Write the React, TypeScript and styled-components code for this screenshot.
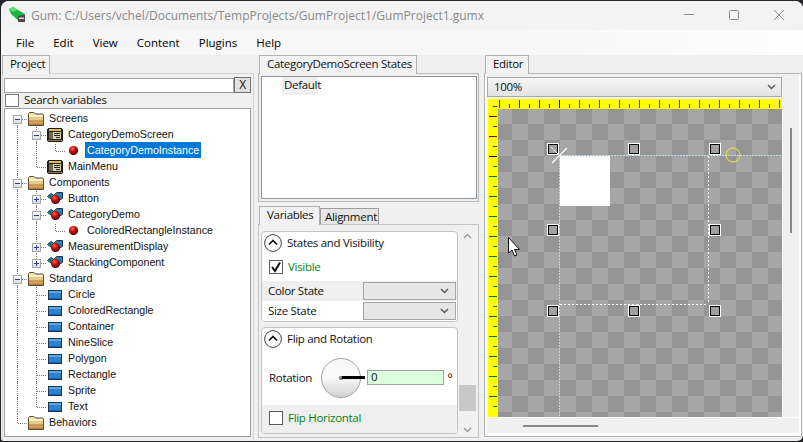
import React from "react";
import styled, { createGlobalStyle } from "styled-components";

const UI_FONT = `"Open Sans", "Liberation Sans", sans-serif`;
const TREE_FONT = `"Liberation Sans", Arial, sans-serif`;

type GuideKind = "pass" | "tee" | "elbow" | "first";
type IconKind = "folder" | "screen" | "component" | "instance" | "standard";

interface TreeNode {
  label: string;
  icon: IconKind;
  guides: GuideKind[];
  expander?: "plus" | "minus";
  selected?: boolean;
}

const standardTypes = ["Circle", "ColoredRectangle", "Container", "NineSlice", "Polygon", "Rectangle", "Sprite"];

const treeNodes: TreeNode[] = [
  { label: "Screens", icon: "folder", guides: ["first"], expander: "minus" },
  { label: "CategoryDemoScreen", icon: "screen", guides: ["pass", "tee"], expander: "minus" },
  { label: "CategoryDemoInstance", icon: "instance", guides: ["pass", "pass", "elbow"], selected: true },
  { label: "MainMenu", icon: "screen", guides: ["pass", "elbow"] },
  { label: "Components", icon: "folder", guides: ["tee"], expander: "minus" },
  { label: "Button", icon: "component", guides: ["pass", "tee"], expander: "plus" },
  { label: "CategoryDemo", icon: "component", guides: ["pass", "tee"], expander: "minus" },
  { label: "ColoredRectangleInstance", icon: "instance", guides: ["pass", "pass", "elbow"] },
  { label: "MeasurementDisplay", icon: "component", guides: ["pass", "tee"], expander: "plus" },
  { label: "StackingComponent", icon: "component", guides: ["pass", "elbow"], expander: "plus" },
  { label: "Standard", icon: "folder", guides: ["tee"], expander: "minus" },
  ...standardTypes.map((label): TreeNode => ({ label, icon: "standard", guides: ["pass", "tee"] })),
  { label: "Text", icon: "standard", guides: ["pass", "elbow"] },
  { label: "Behaviors", icon: "folder", guides: ["elbow"] },
];

const TreeIcon: React.FC<{ kind: IconKind }> = ({ kind }) => {
  if (kind === "folder") {
    return (
      <svg width="16" height="16" viewBox="0 0 16 16">
        <path d="M0.5 14.5V2.5L1.5 1.5H6L7.5 3H14.5L15.5 4V14.5Z" fill="#ece2a8" stroke="#5c4a28" />
        <rect x="1" y="4" width="14" height="2" fill="#f6f0c4" />
        <rect x="1" y="6" width="14" height="3" fill="#e2cc86" />
        <rect x="1" y="9" width="14" height="5" fill="#cf9c58" />
        <rect x="1" y="13" width="14" height="1" fill="#a87838" />
      </svg>
    );
  }
  if (kind === "screen") {
    return (
      <svg width="16" height="16" viewBox="0 0 16 16">
        <rect x="0.5" y="1.5" width="15" height="13" rx="1.5" fill="#26241c" stroke="#1a1a14" />
        <rect x="2" y="2" width="12" height="2" fill="#e6b85a" />
        <rect x="2" y="5" width="12" height="7" fill="#d9d4b4" />
        <rect x="2" y="5" width="4" height="7" fill="#6e6a4c" />
        <rect x="7" y="6" width="6" height="1" fill="#20201a" />
        <rect x="7" y="8" width="6" height="1" fill="#20201a" />
        <rect x="9" y="10" width="4" height="1" fill="#20201a" />
        <rect x="1" y="13" width="14" height="1" fill="#8c7a48" />
      </svg>
    );
  }
  if (kind === "component") {
    return (
      <svg width="18" height="16" viewBox="0 0 18 16">
        <defs>
          <radialGradient id="compBall" cx="40%" cy="30%" r="70%">
            <stop offset="0" stopColor="#ff6a5a" />
            <stop offset="0.45" stopColor="#c80d0d" />
            <stop offset="1" stopColor="#4e0000" />
          </radialGradient>
        </defs>
        <path d="M0.5 5.5L4 2.5L7 4.5L4 8Z" fill="#1c7f78" stroke="#0c3f42" />
        <path d="M7.5 3.5L10 1.5H15.5V7.5L12 9H7.5Z" fill="#2f7db8" stroke="#0e3450" />
        <circle cx="8.5" cy="8.5" r="4.6" fill="url(#compBall)" />
      </svg>
    );
  }
  if (kind === "instance") {
    return (
      <svg width="16" height="16" viewBox="0 0 16 16">
        <defs>
          <radialGradient id="instBall" cx="40%" cy="30%" r="70%">
            <stop offset="0" stopColor="#ff6a5a" />
            <stop offset="0.45" stopColor="#c80d0d" />
            <stop offset="1" stopColor="#4e0000" />
          </radialGradient>
        </defs>
        <circle cx="7.5" cy="7.5" r="4.6" fill="url(#instBall)" />
      </svg>
    );
  }
  return (
    <svg width="16" height="16" viewBox="0 0 16 16" shapeRendering="crispEdges">
      <rect x="1.5" y="3.5" width="13" height="9" fill="#2f7fd0" stroke="#0f3a52" />
      <rect x="2" y="4" width="12" height="2" fill="#5aa6e6" />
      <rect x="2" y="11" width="12" height="1" fill="#1e5f9e" />
    </svg>
  );
};

const AppLogo = () => (
  <svg width="20" height="18" viewBox="0 0 20 18">
    <path d="M1 3L5 1L17 8L11 15L3 8Z" fill="#19b53a" />
    <path d="M1 3L5 1L10 4L5 6Z" fill="#5fdc70" />
    <path d="M10 10L17 8.5V16H10Z" fill="#4c4c4c" />
    <path d="M11 11.5H16V13H11Z" fill="#d8d8d8" />
  </svg>
);

const Chevron: React.FC<{ up?: boolean; color?: string }> = ({ up, color = "#555" }) => (
  <svg width="9" height="6" viewBox="0 0 9 6">
    <path d={up ? "M1 5L4.5 1.5L8 5" : "M1 1L4.5 4.5L8 1"} fill="none" stroke={color} strokeWidth="1.4" />
  </svg>
);

const CollapseButton = () => (
  <CollapseCircle>
    <svg width="18" height="18" viewBox="0 0 18 18">
      <circle cx="9" cy="9" r="8.4" fill="#fdfdfd" stroke="#444" />
      <path d="M5 10.5L9 6.5L13 10.5" fill="none" stroke="#111" strokeWidth="1.7" />
    </svg>
  </CollapseCircle>
);

const CheckMark = () => (
  <svg width="12" height="12" viewBox="0 0 12 12">
    <path d="M2 6L5 10L10 1.5" fill="none" stroke="#111" strokeWidth="2" />
  </svg>
);

const handlePositions = [
  [547, 143],
  [628, 143],
  [709, 143],
  [547, 224],
  [709, 224],
  [547, 305],
  [628, 305],
  [709, 305],
];

const tickColor = (index: number, blackAt: number) =>
  index < blackAt ? "#8b0000" : index === blackAt ? "#000" : "#007000";

const EditorCanvas = () => (
  <CanvasSvg width="294" height="318" viewBox="488 99 294 318" shapeRendering="crispEdges">
    <defs>
      <pattern id="checker" patternUnits="userSpaceOnUse" x="512" y="108" width="32" height="32">
        <rect x="0" y="0" width="32" height="32" fill="#a6a6a6" />
        <rect x="0" y="0" width="16" height="16" fill="#959595" />
        <rect x="16" y="16" width="16" height="16" fill="#959595" />
      </pattern>
    </defs>
    <rect x="498" y="109" width="284" height="308" fill="url(#checker)" />
    <rect x="560" y="156" width="50" height="50" fill="#fff" />

    <line x1="559.5" y1="156" x2="559.5" y2="417" stroke="#b4dcea" strokeDasharray="2 1" />
    <line x1="560" y1="155.5" x2="782" y2="155.5" stroke="#c4e2ec" strokeDasharray="2 1" />
    <line x1="708.5" y1="156" x2="708.5" y2="304" stroke="#fff" strokeDasharray="2 2" />
    <line x1="560" y1="304.5" x2="708" y2="304.5" stroke="#fff" strokeDasharray="2 2" />

    {handlePositions.map(([x, y]) => (
      <g key={`${x}-${y}`}>
        <rect x={x} y={y} width="12" height="12" fill="#fff" />
        <rect x={x + 1} y={y + 1} width="10" height="10" fill="#000" />
        <rect x={x + 2} y={y + 2} width="8" height="8" fill="#a0a0a0" />
      </g>
    ))}

    <g shapeRendering="auto">
      <line x1="552" y1="163" x2="567" y2="148" stroke="#fff" strokeWidth="1.3" />
      <line x1="551" y1="147" x2="558" y2="154" stroke="#eee" />
      <circle cx="733" cy="155" r="7" fill="none" stroke="#f0f020" />
      <path
        d="M508.5 237.5V253L512 250L514.5 256L517 255L514.5 249.5H519.5Z"
        fill="#fff"
        stroke="#111"
        strokeWidth="1"
        strokeLinejoin="round"
      />
    </g>

    <rect x="488" y="99" width="294" height="10" fill="#ffff00" />
    <rect x="488" y="99" width="10" height="318" fill="#ffff00" />
    {Array.from({ length: 29 }, (_, k) => {
      const x = 499.5 + k * 10;
      return (
        <line
          key={k}
          x1={x}
          x2={x}
          y1={k % 2 === 0 ? 100 : 104}
          y2={108}
          stroke={tickColor(k, 6)}
        />
      );
    })}
    {Array.from({ length: 31 }, (_, k) => {
      const y = 106.5 + k * 10;
      const major = k % 2 === 1;
      return (
        <line
          key={k}
          y1={y}
          y2={y}
          x1={major ? 489 : 493}
          x2={497}
          stroke={tickColor(k, 5)}
        />
      );
    })}
  </CanvasSvg>
);

export default function App() {
  return (
    <>
      <GlobalStyle />
      <Window>
        <TitleBar>
          <LogoSlot>
            <AppLogo />
          </LogoSlot>
          <TitleText>Gum: C:/Users/vchel/Documents/TempProjects/GumProject1/GumProject1.gumx</TitleText>
          <WindowControls>
            <svg width="121" height="12" viewBox="0 0 121 12">
              <path d="M20 5.5H30" stroke="#8c8c8c" />
              <rect x="65.5" y="1.5" width="9" height="9" rx="1" fill="none" stroke="#8c8c8c" />
              <path d="M110 1L120 11M120 1L110 11" stroke="#8c8c8c" />
            </svg>
          </WindowControls>
        </TitleBar>

        <MenuBar>
          {["File", "Edit", "View", "Content", "Plugins", "Help"].map((item) => (
            <MenuItem key={item}>{item}</MenuItem>
          ))}
        </MenuBar>

        <Panes>
          <LeftPane>
            <TabStrip>
              <Tab $width={48}>Project</Tab>
            </TabStrip>
            <LeftPanel>
              <SearchRow>
                <SearchInput />
                <ClearButton>X</ClearButton>
              </SearchRow>
              <SearchOption>
                <SearchCheck />
                <SearchCaption>Search variables</SearchCaption>
              </SearchOption>
              <Tree>
                {treeNodes.map((node) => (
                  <TreeRow key={node.label}>
                    {node.guides.map((kind, i) => (
                      <Guide key={i} $kind={kind}>
                        {i === node.guides.length - 1 && node.expander && (
                          <Expander $open={node.expander === "minus"} />
                        )}
                      </Guide>
                    ))}
                    <IconSlot>
                      <TreeIcon kind={node.icon} />
                    </IconSlot>
                    <TreeLabel $selected={node.selected}>{node.label}</TreeLabel>
                  </TreeRow>
                ))}
              </Tree>
            </LeftPanel>
          </LeftPane>

          <MiddlePane>
            <TabStrip>
              <Tab $width={158} $left={1}>CategoryDemoScreen States</Tab>
            </TabStrip>
            <StatesPanel>
              <StatesList>
                <StateItem>Default</StateItem>
              </StatesList>
            </StatesPanel>

            <SecondStrip>
              <Tab $width={61} $left={1}>Variables</Tab>
              <InactiveTab>Alignment</InactiveTab>
            </SecondStrip>
            <VariablesPanel>
              <Groups>
                <Group>
                  <GroupHeader>
                    <CollapseButton />
                    <Caption>States and Visibility</Caption>
                  </GroupHeader>
                  <CheckRow>
                    <CheckBox $dark>
                      <CheckMark />
                    </CheckBox>
                    <GreenLabel>Visible</GreenLabel>
                  </CheckRow>
                  <ComboRow $shaded>
                    <Caption>Color State</Caption>
                    <SmallCombo>
                      <Chevron />
                    </SmallCombo>
                  </ComboRow>
                  <ComboRow>
                    <Caption>Size State</Caption>
                    <SmallCombo>
                      <Chevron />
                    </SmallCombo>
                  </ComboRow>
                </Group>
                <Group>
                  <GroupHeader>
                    <CollapseButton />
                    <Caption>Flip and Rotation</Caption>
                  </GroupHeader>
                  <RotationRow>
                    <RotationLabel>Rotation</RotationLabel>
                    <Knob>
                      <KnobDot />
                      <KnobNeedle />
                    </Knob>
                    <AngleInput>0</AngleInput>
                    <Degree>º</Degree>
                  </RotationRow>
                  <FlipRow>
                    <CheckBox $dark />
                    <GreenLabel>Flip Horizontal</GreenLabel>
                  </FlipRow>
                </Group>
              </Groups>
              <VariablesScroll>
                <ArrowSlot $height={18}>
                  <Chevron up color="#9c9c9c" />
                </ArrowSlot>
                <ScrollThumb />
                <ArrowSlot $height={12}>
                  <Chevron color="#9c9c9c" />
                </ArrowSlot>
              </VariablesScroll>
            </VariablesPanel>
          </MiddlePane>

          <RightPane>
            <TabStrip>
              <Tab $width={44} $left={1}>Editor</Tab>
            </TabStrip>
            <EditorPanel>
              <EditorBody>
                <ZoomCombo>
                  <Caption>100%</Caption>
                  <Chevron />
                </ZoomCombo>
                <CanvasRow>
                  <EditorCanvas />
                  <EditorVScroll>
                    <VThumb />
                  </EditorVScroll>
                </CanvasRow>
                <EditorHScroll>
                  <HThumb />
                </EditorHScroll>
              </EditorBody>
            </EditorPanel>
          </RightPane>
        </Panes>
      </Window>
    </>
  );
}

// Styled components
const GlobalStyle = createGlobalStyle`
  html, body {
    margin: 0;
    padding: 0;
    background: #26262a;
    overflow: hidden;
  }
  * {
    box-sizing: border-box;
  }
`;

const Window = styled.div`
  width: 802px;
  height: 440px;
  margin: 1px 0 1px 1px;
  background: #f0f0f0;
  border-radius: 8px 8px 6px 3px;
  overflow: hidden;
  display: flex;
  flex-direction: column;
  font-family: ${UI_FONT};
  font-size: 11.5px;
  letter-spacing: -0.3px;
  color: #111;
`;

const Caption = styled.span`
  margin-bottom: 2px;
  white-space: nowrap;
`;

const SearchCaption = styled(Caption)`
  margin-bottom: 4px;
`;

const TitleBar = styled.div`
  height: 29px;
  flex: none;
  display: flex;
  align-items: center;
  background: #f3f3f3;
`;

const LogoSlot = styled.div`
  width: 30px;
  padding-left: 7px;
  display: flex;
  margin-top: -1px;
`;

const TitleText = styled.div`
  font-size: 12px;
  letter-spacing: 0;
  color: #8a8a8a;
  white-space: nowrap;
  margin-top: -1px;
`;

const WindowControls = styled.div`
  margin-left: auto;
  margin-right: 18px;
  display: flex;
  margin-top: -1px;
`;

const MenuBar = styled.div`
  height: 25px;
  flex: none;
  display: flex;
  align-items: center;
  gap: 19px;
  padding-left: 15px;
  background: linear-gradient(90deg, #f5f5f5 0%, #f8f8f8 70%, #fdfdfd 100%);
`;

const MenuItem = styled.span`
  font-size: 11.5px;
  letter-spacing: 0;
  color: #000;
`;

const Panes = styled.div`
  flex: 1;
  display: flex;
  padding-left: 1px;
  gap: 4px;
  min-height: 0;
`;

const LeftPane = styled.div`
  width: 252px;
  display: flex;
  flex-direction: column;
`;

const MiddlePane = styled.div`
  width: 221px;
  display: flex;
  flex-direction: column;
`;

const RightPane = styled.div`
  width: 318px;
  margin-left: 1px;
  display: flex;
  flex-direction: column;
`;

const TabStrip = styled.div`
  height: 18px;
  flex: none;
  display: flex;
  align-items: flex-end;
`;

const SecondStrip = styled(TabStrip)`
  margin-top: 4px;
`;

const Tab = styled.div<{ $width: number; $left?: number }>`
  position: relative;
  z-index: 1;
  width: ${({ $width }) => $width}px;
  height: 19px;
  margin-left: ${({ $left }) => $left ?? 0}px;
  margin-bottom: -1px;
  padding-left: 7px;
  line-height: 16px;
  border: 1px solid #b0b0b0;
  border-bottom: none;
  background: #f2f2f2;
  white-space: nowrap;
`;

const InactiveTab = styled.div`
  width: 59px;
  height: 16px;
  padding-left: 4px;
  line-height: 15px;
  border: 1px solid #9c9c9c;
  border-bottom: none;
  background: #e6e6e6;
  white-space: nowrap;
`;

const LeftPanel = styled.div`
  flex: 1;
  height: 365px;
  padding: 3px 2px 0 1px;
  border: 1px solid #d4d4d4;
  border-bottom: none;
  display: flex;
  flex-direction: column;
`;

const SearchRow = styled.div`
  display: flex;
  height: 16px;
  flex: none;
`;

const SearchInput = styled.div`
  width: 230px;
  height: 15px;
  margin-top: 1px;
  background: #fff;
  border: 1px solid #a0a0a0;
`;

const ClearButton = styled.div`
  width: 17px;
  height: 16px;
  line-height: 14px;
  text-align: center;
  font-size: 12px;
  background: #e1e1e1;
  border: 1px solid #707070;
`;

const SearchOption = styled.div`
  height: 14px;
  margin-top: 1px;
  flex: none;
  display: flex;
  align-items: center;
  gap: 5px;
  padding-left: 1px;
`;

const CheckBox = styled.div<{ $dark?: boolean }>`
  width: 14px;
  height: 14px;
  flex: none;
  display: flex;
  align-items: center;
  justify-content: center;
  background: #fff;
  border: 1px solid ${({ $dark }) => ($dark ? "#5c5c5c" : "#7a7a7a")};
`;

const SearchCheck = styled(CheckBox)`
  height: 13px;
  align-self: flex-start;
`;

const Tree = styled.div`
  width: 247px;
  height: 329px;
  padding: 1px 0 0 3px;
  background: #fff;
  border: 1px solid #a0a0a0;
  font-family: ${TREE_FONT};
  font-size: 10.7px;
  letter-spacing: 0;
  color: #111;
`;

const TreeRow = styled.div`
  height: 16px;
  display: flex;
  white-space: nowrap;
`;

const guideVertical: Record<GuideKind, string> = {
  pass: "top: 0; bottom: 0;",
  tee: "top: 0; bottom: 0;",
  elbow: "top: 0; height: 9px;",
  first: "top: 9px; bottom: 0;",
};

const Guide = styled.div<{ $kind: GuideKind }>`
  position: relative;
  width: 19px;
  height: 16px;
  flex: none;

  &::before {
    content: "";
    position: absolute;
    left: 9px;
    ${({ $kind }) => guideVertical[$kind]}
    border-left: 1px dotted #7c7c7c;
  }

  &::after {
    content: "";
    position: absolute;
    left: 10px;
    top: 9px;
    width: 9px;
    border-top: 1px dotted #7c7c7c;
    display: ${({ $kind }) => ($kind === "pass" ? "none" : "block")};
  }
`;

const Expander = styled.div<{ $open: boolean }>`
  position: absolute;
  z-index: 1;
  left: 5px;
  top: 5px;
  width: 9px;
  height: 9px;
  border: 1px solid #a6a6a6;
  background: linear-gradient(#fff, #dcdcdc);

  &::before {
    content: "";
    position: absolute;
    left: 1px;
    top: 3px;
    width: 5px;
    height: 1px;
    background: #23439a;
  }

  &::after {
    content: "";
    position: absolute;
    left: 3px;
    top: 1px;
    width: 1px;
    height: 5px;
    background: #23439a;
    display: ${({ $open }) => ($open ? "none" : "block")};
  }
`;

const IconSlot = styled.div`
  position: relative;
  z-index: 1;
  width: 18px;
  height: 16px;
  margin: 1px 0 0 1px;
  flex: none;
  background: #fff;
`;

const TreeLabel = styled.span<{ $selected?: boolean }>`
  height: 16px;
  margin-left: 1px;
  padding: 0 2px;
  line-height: 17px;
  background: ${({ $selected }) => ($selected ? "#0078d7" : "transparent")};
  color: ${({ $selected }) => ($selected ? "#fff" : "#111")};
`;

const StatesPanel = styled.div`
  height: 129px;
  flex: none;
  padding: 2px 1px 2px 2px;
  border: 1px solid #b8b8b8;
`;

const StatesList = styled.div`
  width: 216px;
  height: 123px;
  background: #fff;
  border: 1px solid #8c949c;
  padding-left: 20px;
`;

const StateItem = styled.div`
  width: 36px;
  height: 18px;
  line-height: 16px;
  padding-left: 2px;
  background: #f0f0f0;
  white-space: nowrap;
`;

const VariablesPanel = styled.div`
  height: 214px;
  flex: none;
  padding: 2px 2px 0 2px;
  border: 1px solid #c4c4c4;
  display: flex;
  gap: 1px;
`;

const Groups = styled.div`
  width: 198px;
  padding-top: 4px;
  display: flex;
  flex-direction: column;
  gap: 5px;
`;

const Group = styled.div`
  background: #fff;
  border: 1px solid #c4c4c4;
  border-radius: 4px;
  overflow: hidden;
`;

const GroupHeader = styled.div`
  height: 22px;
  padding-left: 2px;
  display: flex;
  align-items: center;
  gap: 5px;
`;

const CollapseCircle = styled.div`
  width: 18px;
  height: 18px;
  display: flex;
`;

const CheckRow = styled.div`
  height: 26px;
  margin-bottom: 1px;
  padding-left: 7px;
  display: flex;
  align-items: center;
  gap: 5px;
`;

const GreenLabel = styled.span`
  margin-bottom: 2px;
  color: #0a7d16;
`;

const ComboRow = styled.div<{ $shaded?: boolean }>`
  height: 20px;
  padding: 0 1px 0 6px;
  display: flex;
  align-items: center;
  justify-content: space-between;
  background: ${({ $shaded }) => ($shaded ? "#efefef" : "#fff")};
`;

const SmallCombo = styled.div`
  width: 93px;
  height: 18px;
  padding-right: 6px;
  display: flex;
  align-items: center;
  justify-content: flex-end;
  background: #e6e6e6;
  border: 1px solid #a6a6a6;
`;

const RotationRow = styled.div`
  height: 55px;
  padding-left: 7px;
  display: flex;
  align-items: center;
`;

const RotationLabel = styled.span`
  width: 52px;
  flex: none;
`;

const Knob = styled.div`
  position: relative;
  width: 40px;
  height: 40px;
  flex: none;
  border: 1px solid #a4a4a4;
  border-radius: 50%;
  background: linear-gradient(#f8f8f8, #fafafa 45%, #d2d2d2);
`;

const KnobDot = styled.div`
  position: absolute;
  left: 17px;
  top: 17px;
  width: 4px;
  height: 4px;
  border-radius: 50%;
  background: #777;
`;

const KnobNeedle = styled.div`
  position: absolute;
  left: 20px;
  top: 17px;
  width: 23px;
  height: 3px;
  background: #000;
`;

const AngleInput = styled.div`
  width: 77px;
  height: 15px;
  margin-left: 6px;
  padding-left: 3px;
  line-height: 12px;
  flex: none;
  background: #dcffdc;
  border: 1px solid #a0a0a0;
`;

const Degree = styled.span`
  margin: -1px 0 0 4px;
  font-family: ${TREE_FONT};
  font-size: 11px;
`;

const FlipRow = styled.div`
  height: 28px;
  padding: 6px 0 0 7px;
  display: flex;
  align-items: flex-start;
  gap: 5px;
  line-height: 13px;
  background: #efefef;
`;

const VariablesScroll = styled.div`
  width: 17px;
  height: 209px;
  position: relative;
  display: flex;
  flex-direction: column;
  align-items: stretch;
  justify-content: space-between;
  background: #f0f0f0;
`;

const ArrowSlot = styled.div<{ $height: number }>`
  height: ${({ $height }) => $height}px;
  display: flex;
  align-items: center;
  justify-content: center;
`;

const ScrollThumb = styled.div`
  position: absolute;
  left: 0;
  right: 0;
  top: 158px;
  height: 26px;
  background: #c8c8c8;
`;

const EditorPanel = styled.div`
  height: 364px;
  flex: none;
  padding: 0 2px 3px 2px;
  background: #fff;
  border: 1px solid #b4b4b4;
`;

const EditorBody = styled.div`
  height: 100%;
  padding-top: 3px;
  background: #f0f0f0;
`;

const ZoomCombo = styled.div`
  width: 295px;
  height: 20px;
  padding: 0 5px 0 6px;
  display: flex;
  align-items: center;
  justify-content: space-between;
  background: linear-gradient(#f6f6f6, #e3e3e3);
  border: 1px solid #a8a8a8;
`;

const CanvasRow = styled.div`
  margin: 2px 0 0 1px;
  display: flex;
  height: 318px;
`;

const CanvasSvg = styled.svg`
  display: block;
  flex: none;
`;

const EditorVScroll = styled.div`
  flex: 1;
  padding: 29px 0 0 7px;
  border-left: 1px solid #fff;
`;

const VThumb = styled.div`
  width: 2px;
  height: 105px;
  background: #8a8a8a;
`;

const EditorHScroll = styled.div`
  height: 17px;
  padding: 7px 0 0 36px;
  border-top: 1px solid #fff;
`;

const HThumb = styled.div`
  width: 75px;
  height: 2px;
  background: #8a8a8a;
`;
